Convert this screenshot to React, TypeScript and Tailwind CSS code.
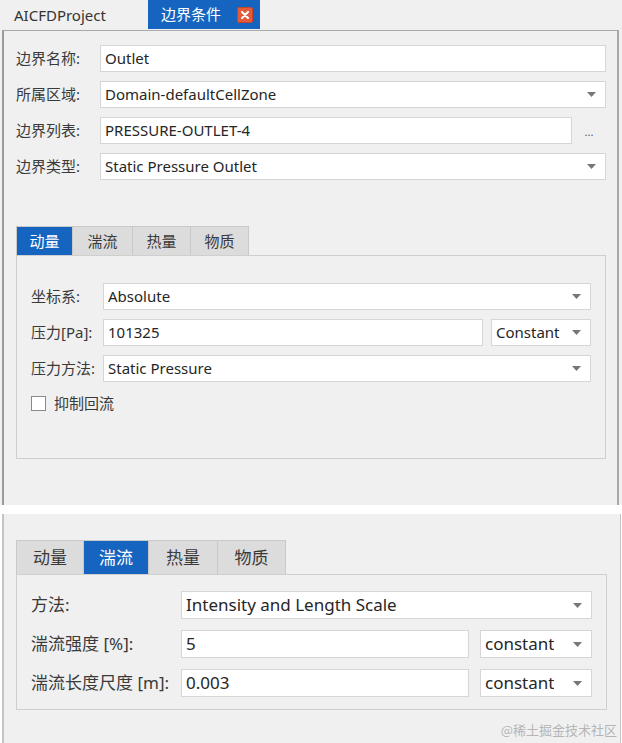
import React from 'react';

const font = { fontFamily: '"Noto Sans", "Noto Sans CJK SC", sans-serif' };

const Caret: React.FC = () => (
  <svg width="9" height="5" viewBox="0 0 9 5" className="shrink-0">
    <path d="M0 0 L9 0 L4.5 5 Z" fill="#777777" />
  </svg>
);

const Field: React.FC<{ value: string; className?: string }> = ({ value, className = '' }) => (
  <div className={`flex items-center bg-white border border-[#d6d6d6] pl-[4px] text-[#262626] ${className}`}>
    <span className="truncate">{value}</span>
  </div>
);

const Select: React.FC<{ value: string; className?: string }> = ({ value, className = '' }) => (
  <div className={`flex items-center justify-between bg-white border border-[#d6d6d6] pl-[4px] pr-[9px] text-[#262626] ${className}`}>
    <span className="truncate">{value}</span>
    <Caret />
  </div>
);

const Tabs: React.FC<{ active: number; widths: number[]; h: string }> = ({ active, widths, h }) => {
  const names = ['动量', '湍流', '热量', '物质'];
  return (
    <div className="flex">
      {names.map((n, i) => (
        <div
          key={n}
          style={{ width: widths[i] }}
          className={`${h} flex items-center justify-center border-t border-r border-[#c9c9c9] ${i === 0 ? 'border-l' : ''} ${
            i === active ? 'bg-[#1565c0] text-white border-[#1565c0]' : 'bg-[#dcdcdc] text-[#3a3a3a]'
          }`}
        >
          {n}
        </div>
      ))}
    </div>
  );
};

export default function App() {
  return (
    <div className="relative w-[622px] h-[743px] bg-white overflow-hidden" style={font}>
      {/* ---- top panel ---- */}
      <div className="h-[505px] bg-[#f0f0f0] flex flex-col">
        <div className="h-[30px] flex items-stretch text-[15px]">
          <div className="w-[148px] flex items-center pl-[14px] text-[#333]">AICFDProject</div>
          <div className="w-[112px] flex items-center pl-[13px] gap-[16px] bg-[#1565c0] text-white h-[29px]">
            <span>边界条件</span>
            <span className="w-[16px] h-[16px] rounded-[2px] bg-[#e25b3b] border border-[#c7452a] flex items-center justify-center">
              <svg width="8" height="8" viewBox="0 0 8 8">
                <path d="M1 1 L7 7 M7 1 L1 7" stroke="white" strokeWidth="2" strokeLinecap="round" />
              </svg>
            </span>
          </div>
        </div>
        <div className="flex-1 ml-[2px] mr-[3px] border-l-2 border-r-2 border-t border-[#a9a9a9] border-l-[#9a9a9a] pt-[14px] pl-[12px] pr-[11px] text-[15px]">
          <div className="flex flex-col gap-[9px]">
            <div className="flex items-center h-[27px]">
              <span className="w-[84px] text-[#3a3a3a]">边界名称:</span>
              <Field value="Outlet" className="flex-1 h-[27px]" />
            </div>
            <div className="flex items-center h-[27px]">
              <span className="w-[84px] text-[#3a3a3a]">所属区域:</span>
              <Select value="Domain-defaultCellZone" className="flex-1 h-[27px]" />
            </div>
            <div className="flex items-center h-[27px]">
              <span className="w-[84px] text-[#3a3a3a]">边界列表:</span>
              <Field value="PRESSURE-OUTLET-4" className="flex-1 h-[27px]" />
              <span className="w-[34px] text-center text-[11px] text-[#555] pt-[4px]">...</span>
            </div>
            <div className="flex items-center h-[27px]">
              <span className="w-[84px] text-[#3a3a3a]">边界类型:</span>
              <Select value="Static Pressure Outlet" className="flex-1 h-[27px]" />
            </div>
          </div>

          <div className="mt-[46px]">
            <Tabs active={0} widths={[57, 60, 58, 58]} h="h-[29px]" />
            <div className="h-[204px] border border-[#cfcfcf] pt-[27px] pl-[14px] pr-[14px]">
              <div className="flex flex-col gap-[9px]">
                <div className="flex items-center h-[27px]">
                  <span className="w-[72px] text-[#3a3a3a]">坐标系:</span>
                  <Select value="Absolute" className="flex-1 h-[27px]" />
                </div>
                <div className="flex items-center h-[27px] gap-[8px]">
                  <span className="w-[64px] text-[#3a3a3a]">压力[Pa]:</span>
                  <Field value="101325" className="flex-1 h-[27px]" />
                  <Select value="Constant" className="w-[100px] h-[27px]" />
                </div>
                <div className="flex items-center h-[27px]">
                  <span className="w-[72px] text-[#3a3a3a]">压力方法:</span>
                  <Select value="Static Pressure" className="flex-1 h-[27px]" />
                </div>
                <div className="flex items-center gap-[8px] mt-[1px]">
                  <span className="w-[15px] h-[15px] bg-white border border-[#8a8a8a]" />
                  <span className="text-[#3a3a3a]">抑制回流</span>
                </div>
              </div>
            </div>
          </div>
        </div>
      </div>

      {/* ---- bottom panel ---- */}
      <div className="mt-[9px] h-[229px] bg-[#f0f0f0] ml-[2px] mr-[1px] border-l-2 border-r border-[#c4c4c4] pt-[26px] pl-[12px] pr-[13px] text-[17px]">
        <Tabs active={1} widths={[68, 65, 69, 68]} h="h-[34px]" />
        <div className="h-[136px] border border-[#cfcfcf] pt-[16px] pl-[14px] pr-[14px]">
          <div className="flex flex-col gap-[11px]">
            <div className="flex items-center h-[28px]">
              <span className="w-[150px] text-[#3a3a3a]">方法:</span>
              <Select value="Intensity and Length Scale" className="flex-1 h-[28px]" />
            </div>
            <div className="flex items-center h-[28px]">
              <span className="w-[150px] text-[#3a3a3a]">湍流强度 [%]:</span>
              <Field value="5" className="flex-1 h-[28px]" />
              <Select value="constant" className="w-[112px] h-[28px] ml-[11px]" />
            </div>
            <div className="flex items-center h-[28px]">
              <span className="w-[150px] text-[#3a3a3a] whitespace-nowrap">湍流长度尺度 [m]:</span>
              <Field value="0.003" className="flex-1 h-[28px]" />
              <Select value="constant" className="w-[112px] h-[28px] ml-[11px]" />
            </div>
          </div>
        </div>
      </div>

      <div
        className="absolute right-[5px] bottom-[4px] text-[13px] text-[#b5b5b5]"
        style={{ fontFamily: '"Noto Sans CJK SC", sans-serif' }}
      >
        @稀土掘金技术社区
      </div>
    </div>
  );
}
